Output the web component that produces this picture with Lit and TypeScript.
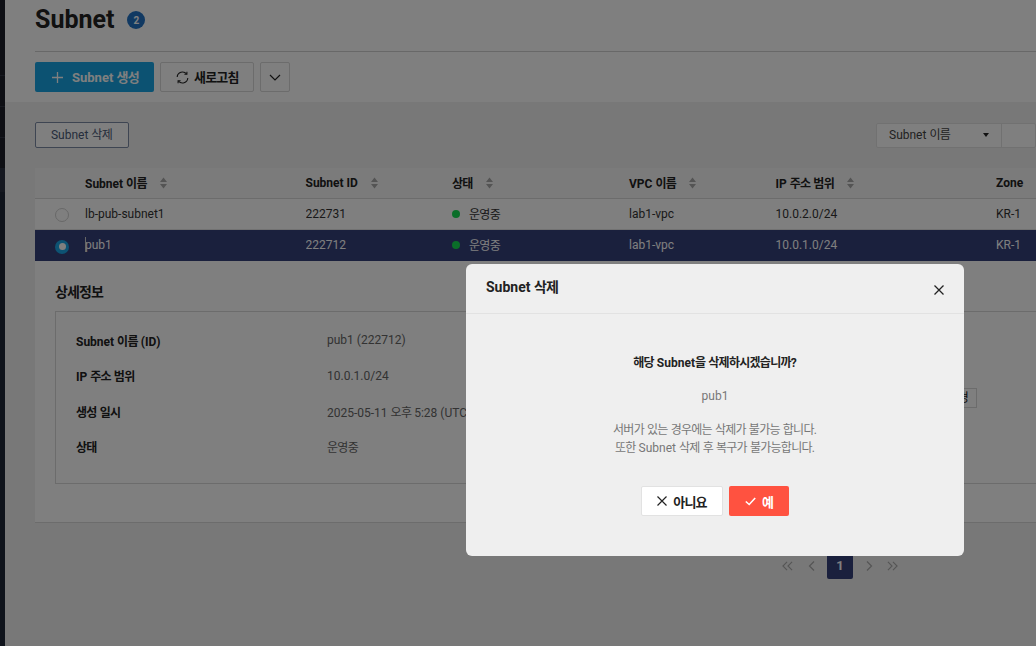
import { LitElement, html, css } from "lit";
import { customElement } from "lit/decorators.js";

// Hangul runs get tighter tracking, the reference's Korean font is narrower than Noto.
const ko = (text: string) =>
  text.split(/([\uac00-\ud7a3]+)/).map((part, i) => (i % 2 ? html`<span class="ko">${part}</span>` : part));

const sort = html`<svg class="sort" width="7" height="12" viewBox="0 0 7 12"><path d="M3.5 0.5 7 5H0zM3.5 11.5 0 7h7z"/></svg>`;
const rows = [
  { name: "lb-pub-subnet1", id: "222731", ip: "10.0.2.0/24", sel: false },
  { name: "pub1", id: "222712", ip: "10.0.1.0/24", sel: true },
];
const details = [
  ["Subnet 이름 (ID)", "pub1 (222712)"],
  ["IP 주소 범위", "10.0.1.0/24"],
  ["생성 일시", "2025-05-11 오후 5:28 (UTC+09:00)"],
  ["상태", "운영중"],
];

@customElement("app-root")
export class AppRoot extends LitElement {
  static styles = css`
    :host { display: block; width: 1036px; height: 646px; overflow: hidden; position: relative; font-family: Roboto, "Noto Sans CJK KR", "Noto Sans", sans-serif; background: #f0f0f0; }
    * { box-sizing: border-box; }
    .ko { letter-spacing: -0.06em; }
    .page { display: flex; width: 1036px; height: 646px; }
    .side { width: 5px; flex: none; background: #1e2636; display: flex; flex-direction: column; }
    .s-top { height: 168px; background: #1c1e28; display: flex; flex-direction: column; padding-top: 75px; gap: 30px; }
    .s-top i { display: block; height: 1px; background: #2e3240; }
    .s-band { height: 24px; background: #2a3040; }
    .main { flex: 1; min-width: 0; display: flex; flex-direction: column; }
    .head { height: 102px; background: #fff; padding: 0 0 0 30px; flex: none; }
    .title-row { height: 52px; display: flex; align-items: flex-start; border-bottom: 1px solid #d0d0d0; padding-top: 5px; gap: 13px; }
    h1 { margin: 0; font-size: 25px; line-height: 30px; font-weight: 700; color: #222; }
    .count { margin-top: 6px; width: 18px; height: 18px; border-radius: 50%; background: #2272c4; color: #fff; font-size: 10px; font-weight: 700; display: flex; align-items: center; justify-content: center; }
    .actions { display: flex; gap: 6px; padding-top: 10px; }
    .btn { height: 30px; border-radius: 2px; display: flex; align-items: center; font-size: 13px; font-weight: 700; }
    .btn > span { margin-bottom: 2px; }
    .create { width: 119px; background: #18a5e4; color: #fff; padding-left: 17px; gap: 9px; }
    .refresh { width: 94px; background: #fff; border: 1px solid #d8d8d8; color: #222; padding-left: 15px; gap: 5px; }
    .more { width: 30px; background: #fff; border: 1px solid #d8d8d8; justify-content: center; }
    .body { flex: 1; padding: 0 0 0 30px; }
    .toolbar { display: flex; justify-content: space-between; align-items: center; margin-top: 20px; height: 26px; }
    .del { width: 94px; height: 26px; background: #fff; border: 1px solid #7d8ba5; border-radius: 2px; font-size: 12px; color: #4a5a78; display: flex; align-items: center; justify-content: center; padding: 0 1px 3px 0; }
    .filter { display: flex; height: 25px; width: 160px; background: #fff; border: 1px solid #e2e2e2; border-radius: 2px; font-size: 12px; color: #444; }
    .filter .sel { width: 125px; flex: none; border-right: 1px solid #e2e2e2; padding: 0 12px 3px; display: flex; align-items: center; justify-content: space-between; }
    .caret { width: 0; height: 0; border-left: 3.5px solid transparent; border-right: 3.5px solid transparent; border-top: 4px solid #222; margin-top: 3px; }
    table { border-collapse: collapse; table-layout: fixed; width: 1001px; margin-top: 20px; font-size: 12px; }
    .c-radio { width: 50px; }
    .c-name { width: 220.5px; }
    .c-id { width: 146.5px; }
    .c-state { width: 177px; }
    .c-vpc { width: 146.5px; }
    .c-ip { width: 220.5px; }
    th { height: 30px; background: #f7f7f7; text-align: left; font-weight: 700; color: #222; border-bottom: 1px solid #d8d8d8; padding: 0; }
    th > span { display: inline-flex; align-items: center; gap: 13px; }
    .sort { fill: #a8a8a8; }
    td { height: 31px; padding: 0; color: #333; background: #fff; border-bottom: 1px solid #e4e4e4; }
    tr.sel td { background: #34407a; color: #fff; border-bottom-color: #34407a; }
    .radio { display: block; width: 14px; height: 14px; border-radius: 50%; background: #fff; border: 1px solid #d0d0d0; margin: 2px 0 0 20px; }
    tr.sel .radio { background: #1ba6e6; border: 0; position: relative; margin-top: 4px; }
    tr.sel .radio::after { content: ""; position: absolute; left: 3.5px; top: 3.5px; width: 7px; height: 7px; border-radius: 50%; background: #fff; }
    .namecell { position: relative; }
    .cursor { position: absolute; left: 0; top: 7px; width: 1px; height: 15px; background: #ccc; }
    .st { display: flex; align-items: center; gap: 9px; }
    .dot { width: 8px; height: 8px; border-radius: 50%; background: #15dc52; }
    .detail { width: 1001px; height: 262px; background: #fff; padding: 22px 0 0 20px; border-bottom: 1px solid #d8d8d8; }
    h2 { margin: 0 0 10px; font-size: 14px; line-height: 18px; font-weight: 700; color: #222; }
    .box { height: 173px; border: 1px solid #d8d8d8; border-right: 0; padding: 11px 59px 0 20px; display: flex; justify-content: space-between; }
    .box .r { display: flex; height: 35.5px; align-items: center; font-size: 12px; }
    .box b { width: 251px; color: #222; font-weight: 700; }
    .box .r > span { color: #666; }
    .chip { margin-top: 65px; width: 60px; height: 20px; border: 1px solid #d8d8d8; background: #fff; font-size: 12px; color: #222; display: flex; align-items: center; justify-content: flex-end; padding: 0 8px 2px 0; }
    .pager { margin-top: 30px; padding-left: 747px; display: flex; align-items: center; }
    .pnum { width: 26px; height: 26px; background: #34407a; border-radius: 2px; color: #fff; font-size: 13px; font-weight: 700; display: flex; align-items: center; justify-content: center; margin: 0 13px 0 12px; }
    .pgap { margin-left: 15px; }
    .pgap2 { margin-left: 14px; }
    .dim { position: absolute; inset: 0; background: rgba(0,0,0,.5); }
    .modal { position: absolute; left: 466px; top: 264px; width: 498px; height: 292px; background: #efefef; border-radius: 6px; display: flex; flex-direction: column; color: #222; }
    .m-head { height: 50px; border-bottom: 1px solid #e2e2e2; padding: 14px 20px 0; display: flex; justify-content: space-between; font-size: 14px; font-weight: 700; line-height: 18px; flex: none; }
    .m-head svg { margin-top: 7px; }
    .m-body { flex: 1; display: flex; flex-direction: column; align-items: center; font-size: 12px; padding-top: 40px; }
    .q { font-weight: 700; line-height: 18px; color: #222; }
    .n { color: #777; line-height: 18px; margin-top: 15px; }
    .note { color: #777; line-height: 18px; margin-top: 16px; text-align: center; }
    .m-btns { display: flex; gap: 6px; margin-top: 29px; }
    .m-btn { height: 30px; border-radius: 2px; display: flex; align-items: center; justify-content: center; font-size: 13px; font-weight: 700; gap: 6px; }
    .no { width: 82px; background: #fff; border: 1px solid #e2e2e2; color: #222; }
    .yes { width: 60px; background: #ff5240; color: #fff; }
  `;

  render() {
    return html`
      <div class="page">
        <div class="side">
          <div class="s-top"><i></i><i></i><i></i></div>
          <div class="s-band"></div>
        </div>
        <div class="main">
          <div class="head">
            <div class="title-row"><h1>Subnet</h1><div class="count">2</div></div>
            <div class="actions">
              <div class="btn create">
                <svg width="11" height="11" viewBox="0 0 11 11"><path d="M5.5 0v11M0 5.5h11" stroke="#fff" stroke-width="1.3" fill="none"/></svg>
                <span>${ko("Subnet 생성")}</span>
              </div>
              <div class="btn refresh">
                <svg width="13" height="13" viewBox="0 0 13 13" fill="none" stroke="#222" stroke-width="1.1"><path d="M1.2 6A5.3 5.3 0 0 1 10.6 3M11.8 7A5.3 5.3 0 0 1 2.4 10"/><path d="M10.9 .8V3.3H8.4M2.1 12.2V9.7H4.6"/></svg>
                <span>${ko("새로고침")}</span>
              </div>
              <div class="btn more"><svg width="12" height="7" viewBox="0 0 12 7"><path d="M1 1l5 5 5-5" stroke="#222" stroke-width="1.2" fill="none"/></svg></div>
            </div>
          </div>
          <div class="body">
            <div class="toolbar">
              <div class="del"><span>${ko("Subnet 삭제")}</span></div>
              <div class="filter"><div class="sel"><span>${ko("Subnet 이름")}</span><i class="caret"></i></div></div>
            </div>
            <table>
              <colgroup><col class="c-radio"/><col class="c-name"/><col class="c-id"/><col class="c-state"/><col class="c-vpc"/><col class="c-ip"/><col/></colgroup>
              <thead><tr>
                <th></th>
                <th><span><span>${ko("Subnet 이름")}</span>${sort}</span></th>
                <th><span><span>Subnet ID</span>${sort}</span></th>
                <th><span><span>${ko("상태")}</span>${sort}</span></th>
                <th><span><span>${ko("VPC 이름")}</span>${sort}</span></th>
                <th><span><span>${ko("IP 주소 범위")}</span>${sort}</span></th>
                <th>Zone</th>
              </tr></thead>
              <tbody>${rows.map(r => html`<tr class=${r.sel ? "sel" : ""}>
                <td><i class="radio"></i></td>
                <td class="namecell">${r.sel ? html`<i class="cursor"></i>` : ""}${r.name}</td>
                <td>${r.id}</td>
                <td><div class="st"><i class="dot"></i><span>${ko("운영중")}</span></div></td>
                <td>lab1-vpc</td><td>${r.ip}</td><td>KR-1</td>
              </tr>`)}</tbody>
            </table>
            <div class="detail">
              <h2>${ko("상세정보")}</h2>
              <div class="box">
                <div>${details.map(d => html`<div class="r"><b>${ko(d[0])}</b><span>${ko(d[1])}</span></div>`)}</div>
                <div class="chip"><span>${ko("변경")}</span></div>
              </div>
            </div>
            <div class="pager">
              <svg width="11" height="10" viewBox="0 0 12 10" fill="none" stroke="#aaa" stroke-width="1.2"><path d="M5.5 .5 1 5l4.5 4.5M11 .5 6.5 5l4.5 4.5"/></svg>
              <svg class="pgap" width="7" height="10" viewBox="0 0 7 10" fill="none" stroke="#aaa" stroke-width="1.2"><path d="M6 .5 1.5 5 6 9.5"/></svg>
              <div class="pnum">1</div>
              <svg width="7" height="10" viewBox="0 0 7 10" fill="none" stroke="#aaa" stroke-width="1.2"><path d="M1 .5 5.5 5 1 9.5"/></svg>
              <svg class="pgap2" width="11" height="10" viewBox="0 0 12 10" fill="none" stroke="#aaa" stroke-width="1.2"><path d="M1 .5 5.5 5 1 9.5M6.5 .5 11 5l-4.5 4.5"/></svg>
            </div>
          </div>
        </div>
      </div>
      <div class="dim"></div>
      <div class="modal">
        <div class="m-head"><span>${ko("Subnet 삭제")}</span>
          <svg width="10" height="10" viewBox="0 0 10 10"><path d="M.5.5l9 9M9.5.5l-9 9" stroke="#222" stroke-width="1.3"/></svg>
        </div>
        <div class="m-body">
          <div class="q">${ko("해당 Subnet을 삭제하시겠습니까?")}</div>
          <div class="n">pub1</div>
          <div class="note">${ko("서버가 있는 경우에는 삭제가 불가능 합니다.")}<br/>${ko("또한 Subnet 삭제 후 복구가 불가능합니다.")}</div>
          <div class="m-btns">
            <div class="m-btn no"><svg width="10" height="10" viewBox="0 0 10 10"><path d="M.5.5l9 9M9.5.5l-9 9" stroke="#222" stroke-width="1.2"/></svg><span>${ko("아니요")}</span></div>
            <div class="m-btn yes"><svg width="11" height="9" viewBox="0 0 11 9"><path d="M.8 4.5l3.4 3L10.2 1" stroke="#fff" stroke-width="1.6" fill="none"/></svg><span>${ko("예")}</span></div>
          </div>
        </div>
      </div>
    `;
  }
}
